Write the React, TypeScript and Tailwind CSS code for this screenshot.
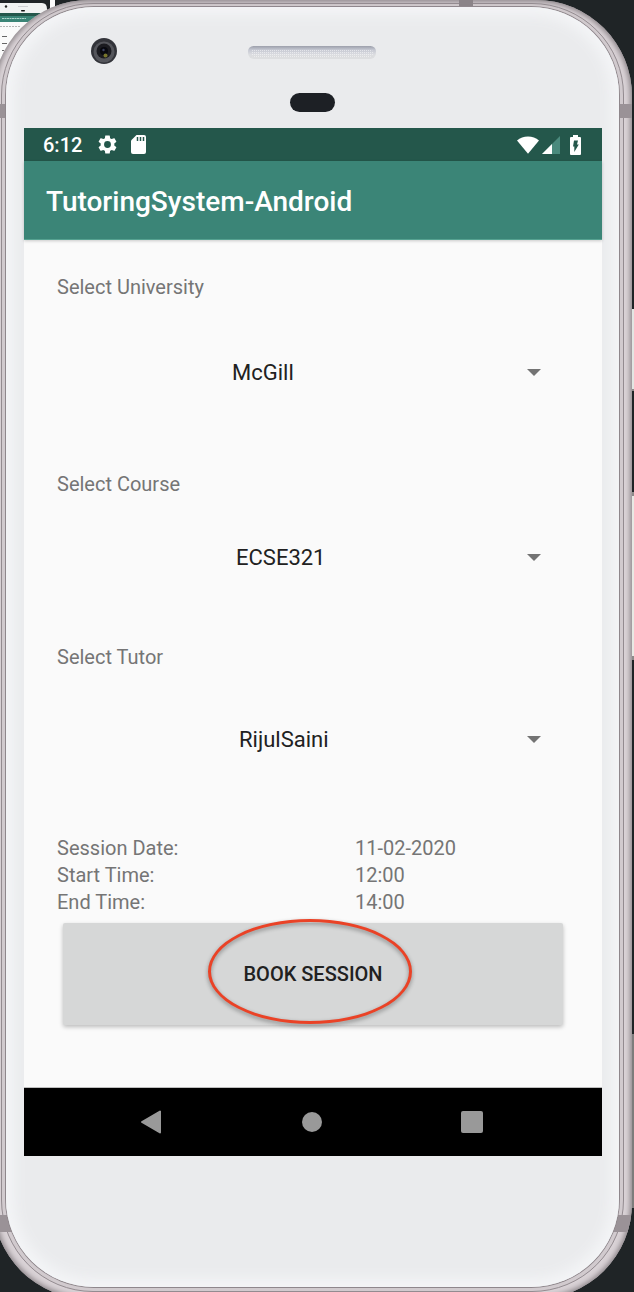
import React from "react";

type SpinnerProps = { id: string; label: string; value: string; indent: string; gap: string };

function Spinner({ id, label, value, indent, gap }: SpinnerProps) {
  return (
    <div className="flex flex-col">
      <label htmlFor={id} className="text-[20px] leading-6 text-[#757575]">
        {label}
      </label>
      <div className={`grid items-center ${gap}`}>
        <select
          id={id}
          defaultValue={value}
          className={`col-start-1 row-start-1 h-12 w-full appearance-none bg-transparent text-[22px] text-[#212121] outline-none ${indent}`}
        >
          <option>{value}</option>
        </select>
        <svg
          viewBox="0 0 14 7"
          className="pointer-events-none col-start-1 row-start-1 mr-7 h-[7px] w-[14px] justify-self-end"
          aria-hidden="true"
        >
          <path d="M0 0h14L7 7z" fill="#737373" />
        </svg>
      </div>
    </div>
  );
}

function StatusBar() {
  return (
    <div className="flex h-[33px] items-center bg-[#24574b] pr-[21px] pl-[19px] text-white">
      <span className="text-[20px] leading-6 font-medium">6:12</span>
      <svg viewBox="2 2 20 20" className="ml-4 h-[19px] w-[19px]" aria-hidden="true">
        <path
          fill="#fff"
          d="M19.14 12.94c.04-.3.06-.61.06-.94 0-.32-.02-.64-.07-.94l2.03-1.58a.49.49 0 0 0 .12-.61l-1.92-3.32a.488.488 0 0 0-.59-.22l-2.39.96c-.5-.38-1.03-.7-1.62-.94l-.36-2.54a.484.484 0 0 0-.48-.41h-3.84c-.24 0-.43.17-.47.41l-.36 2.54c-.59.24-1.13.57-1.62.94l-2.39-.96c-.22-.08-.47 0-.59.22L2.74 8.87c-.12.21-.08.47.12.61l2.03 1.58c-.05.3-.09.63-.09.94s.02.64.07.94l-2.03 1.58a.49.49 0 0 0-.12.61l1.92 3.32c.12.22.37.29.59.22l2.39-.96c.5.38 1.03.7 1.62.94l.36 2.54c.05.24.24.41.48.41h3.84c.24 0 .44-.17.47-.41l.36-2.54c.59-.24 1.13-.56 1.62-.94l2.39.96c.22.08.47 0 .59-.22l1.92-3.32c.12-.22.07-.47-.12-.61l-2.01-1.58zM12 15.6A3.6 3.6 0 1 1 12 8.4a3.6 3.6 0 0 1 0 7.2z"
        />
      </svg>
      <svg viewBox="0 0 15 19" className="ml-[14px] h-[19px] w-[15px]" aria-hidden="true">
        <path fill="#fff" d="M5.500 0H13q2 0 2 2v15q0 2-2 2H2q-2 0-2-2V5.500z" />
        <path d="M6.500 2v4M9.500 2v4M12.500 2v4" stroke="#24574b" strokeWidth="1.500" />
      </svg>
      <span className="flex-1" />
      <svg viewBox="0 0 22 18" className="h-[18px] w-[22px]" aria-hidden="true">
        <path d="M0 4.500C3 1.800 6.800.5 11 .5s8 1.300 11 4L11 17.800z" fill="#fff" />
      </svg>
      <svg viewBox="0 0 18 18" className="mt-[1px] ml-[3px] h-[18px] w-[18px]" aria-hidden="true">
        <path d="M18 0v18H0z" fill="#4a8a7d" />
        <path d="M10 8v10H0z" fill="#fff" />
      </svg>
      <svg viewBox="0 0 11 20" className="ml-[10px] h-5 w-[11px]" aria-hidden="true">
        <path d="M3 0h5v2h2q1 0 1 1v16q0 1-1 1H1q-1 0-1-1V3q0-1 1-1h2z" fill="#fff" />
        <path d="M4 5.500h4L7 9.500h1.800L4.300 17v-5.500H3z" fill="#24574b" />
      </svg>
    </div>
  );
}

function NavBar() {
  return (
    <nav className="flex h-[69px] items-center justify-between border-t border-[#bdbdbd] bg-black pr-[119px] pl-[116px]">
      <button aria-label="Back">
        <svg viewBox="0 0 22 24" className="h-6 w-[22px]">
          <path d="M20 1.500v21L2 12z" fill="#999" stroke="#999" strokeWidth="2" strokeLinejoin="round" />
        </svg>
      </button>
      <button aria-label="Home" className="h-5 w-5 rounded-full bg-[#999]" />
      <button aria-label="Overview" className="h-[22px] w-[22px] rounded-[2px] bg-[#999]" />
    </nav>
  );
}

const session = [
  ["Session Date:", "11-02-2020"],
  ["Start Time:", "12:00"],
  ["End Time:", "14:00"],
];

function Screen() {
  return (
    <div className="flex flex-col bg-[#fafafa]">
      <StatusBar />
      <header className="z-10 flex h-[79px] items-center border-b border-[#56a291] bg-[#3b8577] px-[22px] pt-1 shadow-[0_1px_3px_rgba(0,0,0,0.2)]">
        <h1 className="text-[28px] leading-8 font-medium text-white">TutoringSystem-Android</h1>
      </header>
      <form className="flex flex-col px-[33px] pt-[35px] pb-[62px]" onSubmit={(e) => e.preventDefault()}>
        <Spinner id="university" label="Select University" value="McGill" indent="pl-[175px]" gap="mt-[49px]" />
        <div className="h-[76px]" />
        <Spinner id="course" label="Select Course" value="ECSE321" indent="pl-[179px]" gap="mt-[37px]" />
        <div className="h-16" />
        <Spinner id="tutor" label="Select Tutor" value="RijulSaini" indent="pl-[182px]" gap="mt-[46px]" />
        <dl className="mt-[72px] flex flex-col text-[20px] leading-[27px] text-[#757575]">
          {session.map(([name, value]) => (
            <div key={name} className="grid grid-cols-[298px_1fr]">
              <dt>{name}</dt>
              <dd>{value}</dd>
            </div>
          ))}
        </dl>
        <div className="relative mx-[6px] mt-[7px]">
          <button
            type="submit"
            className="block h-[102px] w-full rounded-[2px] bg-[#d6d7d7] text-[20px] font-medium text-[#212121] shadow-[0_2px_4px_rgba(0,0,0,0.25)]"
          >
            BOOK SESSION
          </button>
          <span className="pointer-events-none absolute -top-1 left-[145px] h-[105px] w-[204px] rounded-[50%] border-[3px] border-[#ea4226] drop-shadow-[0_2px_2px_rgba(0,0,0,0.4)]" />
        </div>
      </form>
      <NavBar />
    </div>
  );
}

function Speaker() {
  return (
    <svg viewBox="0 0 128 14" className="h-[14px] w-32" aria-hidden="true">
      <defs>
        <linearGradient id="slot" x1="0" y1="0" x2="0" y2="1">
          <stop offset="0" stopColor="#9c9fab" />
          <stop offset="0.35" stopColor="#c5c8d2" />
          <stop offset="0.8" stopColor="#dddee2" />
          <stop offset="1" stopColor="#d9dadc" />
        </linearGradient>
        <pattern id="mesh" width="2" height="2" patternUnits="userSpaceOnUse">
          <rect width="1" height="1" fill="#fff" opacity="0.5" />
        </pattern>
      </defs>
      <rect y="1" width="128" height="12" rx="6" fill="#dddee0" />
      <rect x="0" y="0" width="128" height="11" rx="5.500" fill="url(#slot)" />
      <rect x="3" y="3" width="122" height="8" rx="4" fill="url(#mesh)" />
    </svg>
  );
}

function Camera() {
  return (
    <svg viewBox="0 0 26 26" className="h-[26px] w-[26px]" aria-hidden="true">
      <circle cx="13" cy="13" r="13" fill="#33343a" />
      <circle cx="13" cy="14" r="10.500" fill="#55565c" />
      <circle cx="13" cy="13" r="7.500" fill="#1b1b20" />
      <circle cx="13" cy="13" r="4" fill="#08090f" />
      <circle cx="12.500" cy="12" r="1.200" fill="#3c4160" />
      <circle cx="14.500" cy="17.500" r="2" fill="#77752c" />
    </svg>
  );
}

function Thumbnail() {
  return (
    <svg viewBox="0 0 60 64" className="absolute top-0 left-0 h-16 w-[60px]" aria-hidden="true">
      <rect width="55" height="64" fill="#fafafa" />
      <rect width="50" height="12" fill="#202427" />
      <path d="M0 3h42q5 0 5 6v5H0z" fill="#f1f2f2" />
      <circle cx="6" cy="6.500" r="1.200" fill="#222" />
      <rect x="18" y="6" width="10" height="1" fill="#cfd0d3" />
      <rect x="21" y="10" width="4" height="1.500" rx="0.700" fill="#111" />
      <rect y="13" width="50" height="3" fill="#24574b" />
      <rect y="16" width="50" height="6" fill="#3b8577" />
      <path d="M2 18.500h24" stroke="#b9dcd4" strokeWidth="0.900" strokeDasharray="2 0.500" />
      <path d="M0 26.500h20" stroke="#a5a5a5" strokeWidth="0.800" strokeDasharray="2 1" />
      <path d="M2 36.500h5M2 43.500h5M2 50.500h2" stroke="#666" strokeWidth="1.200" />
    </svg>
  );
}

export default function App() {
  return (
    <main
      className="relative min-h-screen overflow-hidden bg-[#1f2426]"
      style={{ fontFamily: 'Roboto, "Noto Sans", sans-serif' }}
    >
      <Thumbnail />
      <span className="absolute top-[309px] right-0 h-[82px] w-1 border-b-2 border-[#8d8b8a] bg-[#e3e6e3]" />
      <span className="absolute top-[492px] right-0 h-[168px] w-1 border-y-4 border-[#8d8b8a] bg-[#e8e9e4]" />
      <span className="absolute top-[1034px] right-0 h-[174px] w-1 bg-[#7d7c7c]" />
      <div className="relative mr-[2px] -mb-2 -ml-[7px] overflow-hidden rounded-[96px] bg-[#d9d2d6] px-2 pt-[3px] pb-[7px] shadow-[inset_0_0_5px_2px_#8f888c]">
        <span className="absolute top-0 right-[159px] h-[6px] w-[14px] bg-[#8b8488]" />
        <span className="absolute top-[104px] left-0 h-[14px] w-3 bg-[#9a9297]" />
        <span className="absolute top-[104px] right-0 h-[14px] w-3 bg-[#9a9297]" />
        <span className="absolute bottom-[67px] left-0 h-[17px] w-5 bg-[#9a9297]" />
        <span className="absolute right-0 bottom-[67px] h-[17px] w-5 bg-[#9a9297]" />
        <div className="rounded-[92px] border border-[#938b90] bg-[#cbc4c8]/60 px-1 pt-[3px] pb-1">
          <div className="relative rounded-[88px] bg-[#eaebed] pr-[17px] pb-[131px] pl-[18px] shadow-[inset_0_0_14px_8px_#f4f5f7,0_0_0_1px_#8f878c]">
            <div className="grid h-[121px] grid-cols-[1fr_auto_1fr] items-start pr-[2px]">
              <div className="pt-[31px] pl-[67px]">
                <Camera />
              </div>
              <div className="flex flex-col items-center pt-[39px]">
                <Speaker />
                <span className="mt-[33px] h-[19px] w-[45px] rounded-full bg-[#1d2025]" />
              </div>
            </div>
            <Screen />
          </div>
        </div>
      </div>
    </main>
  );
}
